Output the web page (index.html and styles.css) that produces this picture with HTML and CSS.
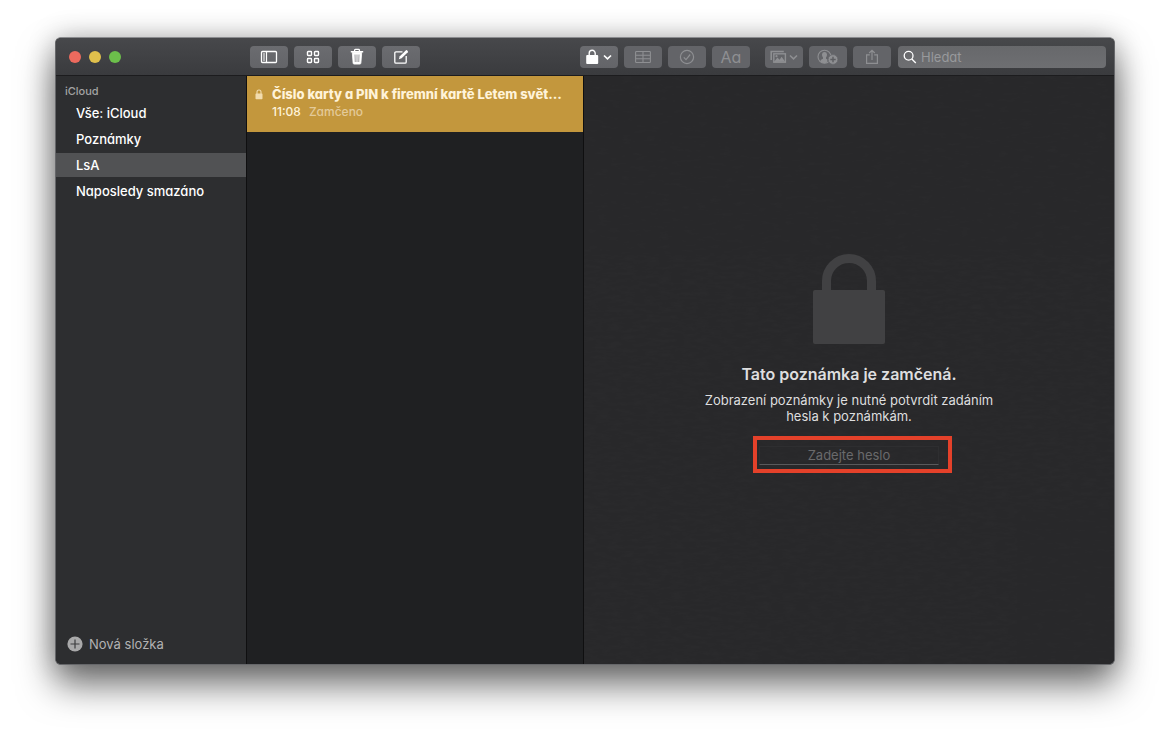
FILE: index.html
```html
<!DOCTYPE html>
<html lang="cs">
<head>
<meta charset="utf-8">
<title>Poznámky</title>
<link rel="stylesheet" href="styles.css">
</head>
<body>
<main class="window">
  <header class="toolbar">
    <div class="lights">
      <button class="light close" aria-label="Zavřít"></button>
      <button class="light minimize" aria-label="Minimalizovat"></button>
      <button class="light maximize" aria-label="Zvětšit"></button>
    </div>
    <div class="group">
      <button class="tool" aria-label="Zobrazit složky">
        <svg width="18" height="14" viewBox="0 0 18 14" fill="none" stroke="currentColor"><rect x="1.5" y="1.5" width="15" height="11" rx="1" stroke-width="1.3"/><path d="M6.5 1.5v11" stroke-width="1.2"/><path d="M3 4h2M3 6h2M3 8h2M3 10h2"/></svg>
      </button>
      <button class="tool" aria-label="Galerie">
        <svg width="14" height="14" viewBox="0 0 14 14" fill="none" stroke="currentColor" stroke-width="1.4"><rect x="1.5" y="1.5" width="4" height="4" rx=".7"/><rect x="8.5" y="1.5" width="4" height="4" rx=".7"/><rect x="1.5" y="8.5" width="4" height="4" rx=".7"/><rect x="8.5" y="8.5" width="4" height="4" rx=".7"/></svg>
      </button>
      <button class="tool" aria-label="Smazat">
        <svg width="14" height="18" viewBox="0 0 14 18" fill="none" stroke="currentColor"><path d="M.8 3.7h12.4" stroke-width="1.5"/><path d="M4.6 3.2V2.2q0-.8.8-.8h3.2q.8 0 .8.8v1" stroke-width="1.3"/><path d="M2.3 4.5l.8 10.6q.1 1 1 1h5.8q.9 0 1-1l.8-10.6z" fill="currentColor" stroke-width=".8"/><path d="M5 6.5l.3 7.500M7 6.500V14M9 6.500L8.700 14" stroke="#aaaaad" stroke-width="1.200"/></svg>
      </button>
      <button class="tool" aria-label="Nová poznámka">
        <svg width="16" height="16" viewBox="0 0 16 16" fill="none" stroke="currentColor"><path d="M9.500 2.800H3q-1.200 0-1.200 1.200v9q0 1.200 1.200 1.200h9q1.200 0 1.200-1.200V7" stroke-width="1.300"/><path d="M5.800 10.300l1-3 6.200-6q.5-.4 1 0l.8.900q.4.500 0 1l-6.200 6z" fill="currentColor" stroke="none"/></svg>
      </button>
    </div>
    <div class="group format">
      <button class="tool" aria-label="Zámek">
        <svg width="28" height="16" viewBox="0 0 28 16" fill="none" stroke="currentColor"><path d="M4.200 8V4.300a3 3 0 0 1 6 0V8" stroke-width="1.400"/><rect x="1.200" y="6" width="12" height="9" rx="1" fill="currentColor" stroke="none"/><path d="M19 6.500l3.500 3.300L26 6.500" stroke-width="1.700"/></svg>
      </button>
      <button class="tool" aria-label="Tabulka" disabled>
        <svg width="16" height="14" viewBox="0 0 16 14" fill="none" stroke="currentColor" stroke-width="1.100"><rect x=".6" y="1.500" width="14.800" height="11" rx=".8"/><path d="M8 1.500v11M.6 5.200h14.800M.6 8.800h14.800"/></svg>
      </button>
      <button class="tool" aria-label="Seznam úkolů" disabled>
        <svg width="16" height="16" viewBox="0 0 16 16" fill="none" stroke="currentColor" stroke-width="1.200"><circle cx="8" cy="8" r="6.600"/><path d="M4.800 8.300l2.200 2.400 4.200-5.200"/></svg>
      </button>
      <button class="tool letters" aria-label="Formát" disabled>Aa</button>
    </div>
    <div class="group share">
      <button class="tool" aria-label="Média" disabled>
        <svg width="28" height="14" viewBox="0 0 28 14" fill="none" stroke="currentColor"><path d="M1.200 10V1.500h12.600" stroke-width="1.600"/><rect x="3.800" y="3.800" width="11.600" height="8.400" stroke-width="1.400"/><path d="M4 12l3.400-4.500 2.200 2.200 2-3 3.600 5z" fill="currentColor" stroke="none"/><circle cx="6.500" cy="6.200" r="1.100" fill="currentColor" stroke="none"/><path d="M20 5.500l3.500 3.300L27 5.500" stroke-width="1.600"/></svg>
      </button>
      <button class="tool" aria-label="Přidat osoby" disabled>
        <svg width="22" height="16" viewBox="0 0 22 16" fill="none" stroke="currentColor"><circle cx="7.500" cy="7.800" r="6.500" stroke-width="1.100"/><path d="M3.200 12.300q.3-1.800 2.800-2.600V8.500Q4.800 7 5 5.200 5.300 3 7.500 3T10 5.200q.2 1.800-1 3.300v1.200l1.500.8-.3 2.700q-3.700 2.300-7-.9z" fill="currentColor" stroke="none"/><circle cx="16" cy="10.500" r="4.900" fill="currentColor" stroke="#66676b" stroke-width=".8"/><path d="M16 7.800v5.400M13.300 10.500h5.400" stroke="#5d5e62" stroke-width="1.400"/></svg>
      </button>
      <button class="tool" aria-label="Sdílet" disabled>
        <svg width="14" height="16" viewBox="0 0 14 16" fill="none" stroke="currentColor" stroke-width="1.200"><path d="M4.800 5.800H1.600v8.600h10.800V5.800H9.200M7 11V1.400M4.200 4L7 1.300 9.800 4"/></svg>
      </button>
    </div>
    <label class="search">
      <svg width="14" height="14" viewBox="0 0 14 14" fill="none" stroke="currentColor" stroke-width="1.300"><circle cx="5.600" cy="5.800" r="4.400"/><path d="M8.800 9l4 4"/></svg>
      <input type="search" placeholder="Hledat" aria-label="Hledat">
    </label>
  </header>
  <div class="panes">
    <nav class="sidebar">
      <h2 class="account">iCloud</h2>
      <a class="folder" href="#">Vše: iCloud</a>
      <a class="folder" href="#">Poznámky</a>
      <a class="folder selected" href="#">LsA</a>
      <a class="folder" href="#">Naposledy smazáno</a>
      <button class="new-folder">
        <svg width="16" height="16" viewBox="0 0 16 16"><circle cx="8" cy="8" r="7.600" fill="#a9a9aa"/><path d="M8 3.500v9M3.500 8h9" stroke="#3c3d3f" stroke-width="1.200"/></svg>
        Nová složka
      </button>
    </nav>
    <section class="list">
      <article class="note-item">
        <svg width="8" height="11" viewBox="0 0 8 11" fill="none" stroke="currentColor"><path d="M2 5V3a2 2 0 0 1 4 0v2" stroke-width="1.100"/><rect x=".5" y="4.400" width="7" height="5.800" rx=".7" fill="currentColor" stroke="none"/></svg>
        <div class="note-text">
          <h3 class="note-title">Číslo karty a PIN k firemní kartě Letem svět...</h3>
          <p class="note-meta"><time>11:08</time><span class="status">Zamčeno</span></p>
        </div>
      </article>
    </section>
    <section class="note">
      <svg class="paper" aria-hidden="true"><filter id="grain"><feTurbulence type="fractalNoise" baseFrequency=".08 .3" numOctaves="3" seed="4"/><feColorMatrix values="0 0 0 0 1  0 0 0 0 1  0 0 0 0 1  1 0 0 0 -.3"/></filter><rect width="100%" height="100%" filter="url(#grain)"/></svg>
      <div class="locked">
        <svg width="72" height="90" viewBox="0 0 72 90" fill="none"><path d="M13.500 38V27a22.500 22.500 0 0 1 45 0V38" stroke="#414143" stroke-width="9"/><rect y="36" width="72" height="54" rx="2" fill="#414143"/></svg>
        <h1 class="heading">Tato poznámka je zamčená.</h1>
        <p class="message">Zobrazení poznámky je nutné potvrdit zadáním hesla k poznámkám.</p>
        <div class="field">
          <input class="password" type="password" placeholder="Zadejte heslo" aria-label="Zadejte heslo">
          <span class="highlight"></span>
        </div>
      </div>
    </section>
  </div>
</main>
</body>
</html>
```
FILE: styles.css
```css
* { box-sizing: border-box; margin: 0; }

body {
  display: flex;
  min-height: 100vh;
  padding: 37px 55px 73px;
  background: #fff;
  font: 13px/16px Inter, "Noto Sans", sans-serif;
  color: #fff;
}

button, input { font: inherit; color: inherit; border: 0; padding: 0; outline: 0; }
svg { display: block; flex: none; }

.window {
  flex: 1;
  display: flex;
  flex-direction: column;
  border: 1px solid #66676a;
  border-top-color: #8b8c8f;
  border-radius: 6px;
  overflow: hidden;
  background: #28282a;
  box-shadow: 0 20px 36px rgba(0, 0, 0, .55), 0 0 28px rgba(0, 0, 0, .24);
}

.toolbar {
  display: flex;
  align-items: center;
  height: 38px;
  padding: 0 8px 0 13px;
  background: linear-gradient(#47484b, #3a3b3e);
  border-bottom: 1px solid #1c1c1e;
}

.lights { display: flex; gap: 8px; width: 181px; }
.light { width: 12px; height: 12px; border-radius: 50%; }
.close { background: #ec6a5e; }
.minimize { background: #e0c04c; }
.maximize { background: #6cbf4b; }

.group { display: flex; gap: 6px; }
.format { margin-left: auto; }
.share { margin: 0 7px 0 15px; }

.tool {
  display: flex;
  align-items: center;
  justify-content: center;
  width: 38px;
  height: 22px;
  border-radius: 4px;
  background: linear-gradient(#6b6c70, #636468);
}
.tool:disabled { color: #8e8f92; background: #636468; }
.tool.letters { font-size: 16px; }

/* Single-storey "a" */
.letters, .search, .folder, .note-item { font-feature-settings: "cv11"; }

.search {
  display: flex;
  align-items: center;
  gap: 4px;
  width: 208px;
  height: 22px;
  padding: 0 5px;
  border-radius: 4px;
  background: linear-gradient(#67686b, #6e6f72);
}
.search input { flex: 1; min-width: 0; background: none; appearance: none; }
.search input::placeholder { color: #98999c; }

.panes { flex: 1; display: flex; }

.sidebar {
  display: flex;
  flex-direction: column;
  gap: 2px;
  width: 191px;
  padding-bottom: 12px;
  background: #2d2e30;
  border-right: 1px solid #0f0f10;
}
.account { padding: 7px 9px 0; font-size: 11px; font-weight: 500; color: #a3a3a4; }
.folder {
  padding: 4px 20px;
  color: #fff;
  font-weight: 500;
  text-decoration: none;
}
.selected { background: #515254; }
.new-folder {
  display: flex;
  align-items: center;
  gap: 6px;
  margin-top: auto;
  padding-left: 11px;
  background: none;
  color: #b2b2b3;
}

.list { width: 337px; background: #1f2022; border-right: 1px solid #0f0f10; }
.note-item {
  display: flex;
  gap: 9px;
  height: 56px;
  padding: 10px 8px;
  background: #c3973d;
  color: #fff3d9;
}
.note-item > svg { margin-top: 3px; color: #f2dcae; }
.note-text { min-width: 0; }
.note-title { font-size: 13px; font-weight: 800; line-height: 16px; white-space: nowrap; }
.note-meta { display: flex; gap: 8px; margin-top: 2px; font-size: 12px; font-weight: 500; }
.status { color: #e3ca99; }

.note {
  position: relative;
  flex: 1;
  display: flex;
  align-items: center;
  justify-content: center;
  padding-bottom: 22px;
  background: #28282a;
}
.paper { position: absolute; inset: 0; width: 100%; height: 100%; opacity: .02; }
.locked {
  position: relative;
  display: flex;
  flex-direction: column;
  align-items: center;
  width: 300px;
  text-align: center;
  color: #dededf;
}
.heading { margin-top: 20px; font-size: 16px; line-height: 20px; font-weight: 600; }
.message { margin-top: 8px; }
.field { position: relative; margin-top: 22px; }
.password {
  display: block;
  width: 180px;
  height: 19px;
  background: none;
  border: 1px solid #2e2e30;
  border-bottom-color: #59595b;
  text-align: center;
}
.password::placeholder { color: #6a6a6c; }
.highlight {
  position: absolute;
  inset: -10px -13px -8px -6px;
  border: 4px solid #e4412a;
  pointer-events: none;
}
```
